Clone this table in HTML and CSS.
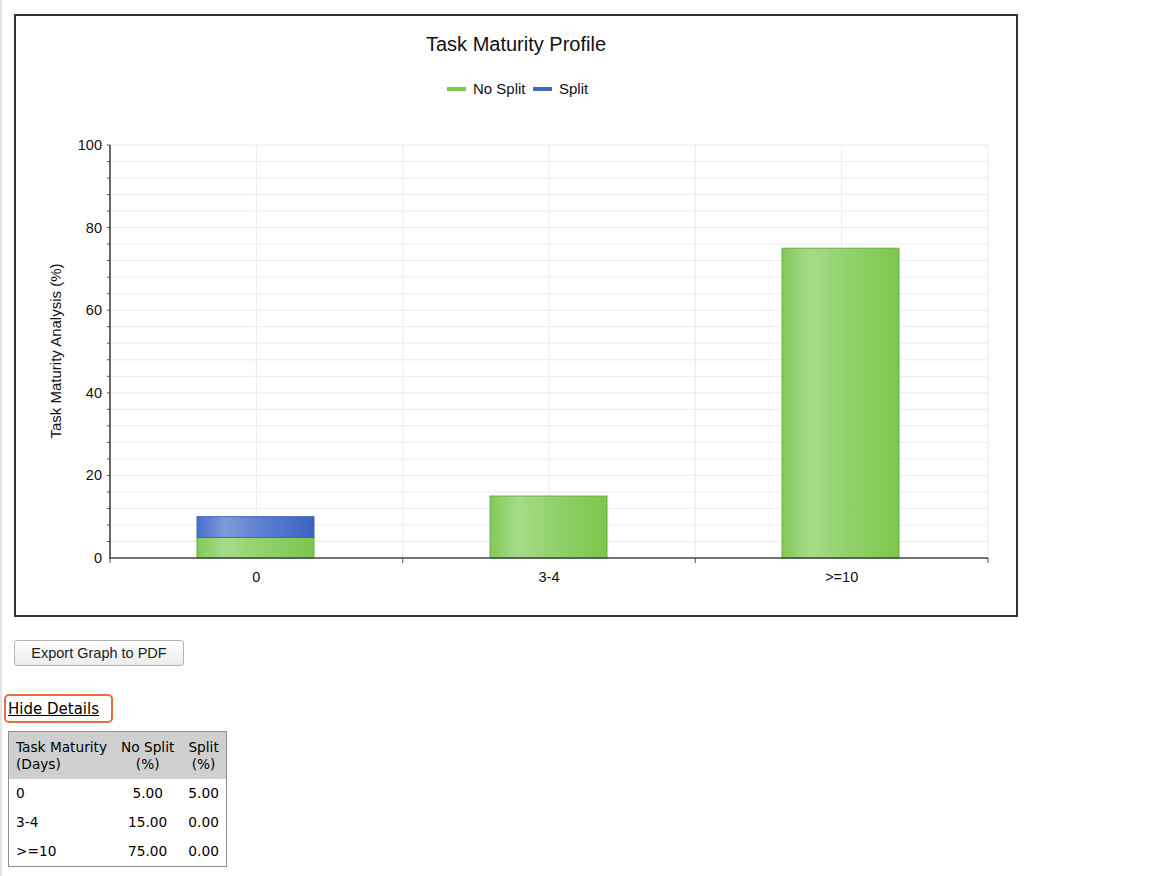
FILE: index.html
```html
<!DOCTYPE html>
<html>
<head>
<meta charset="utf-8">
<title>Task Maturity Profile</title>
<link rel="stylesheet" href="styles.css">
</head>
<body>
<div class="page">
  <div class="chart-box">
    <svg class="chart" width="1000" height="599" viewBox="0 0 1000 599" xmlns="http://www.w3.org/2000/svg">
      <defs>
        <linearGradient id="gGreen" x1="0" y1="0" x2="1" y2="0">
          <stop offset="0" stop-color="#82c957"/>
          <stop offset="0.24" stop-color="#a7db8a"/>
          <stop offset="0.55" stop-color="#92d16c"/>
          <stop offset="1" stop-color="#7bc74c"/>
        </linearGradient>
        <linearGradient id="gBlue" x1="0" y1="0" x2="1" y2="0">
          <stop offset="0" stop-color="#4870cd"/>
          <stop offset="0.24" stop-color="#809bda"/>
          <stop offset="0.55" stop-color="#5d80d2"/>
          <stop offset="1" stop-color="#3c63c2"/>
        </linearGradient>
      </defs>
      <text class="title" x="500" y="35" text-anchor="middle">Task Maturity Profile</text>
      <line x1="431" y1="73" x2="450" y2="73" stroke="#7cc84f" stroke-width="4"/>
      <text class="legend" x="457" y="78">No Split</text>
      <line x1="517" y1="73" x2="536" y2="73" stroke="#4368c6" stroke-width="4"/>
      <text class="legend" x="543" y="78">Split</text>

      <g class="grid">
        <line x1="94" y1="129" x2="972" y2="129"/>
        <line x1="94" y1="145.5" x2="972" y2="145.5"/>
        <line x1="94" y1="162" x2="972" y2="162"/>
        <line x1="94" y1="178.6" x2="972" y2="178.6"/>
        <line x1="94" y1="195.1" x2="972" y2="195.1"/>
        <line x1="94" y1="211.6" x2="972" y2="211.6"/>
        <line x1="94" y1="228.1" x2="972" y2="228.1"/>
        <line x1="94" y1="244.6" x2="972" y2="244.6"/>
        <line x1="94" y1="261.2" x2="972" y2="261.2"/>
        <line x1="94" y1="277.7" x2="972" y2="277.7"/>
        <line x1="94" y1="294.2" x2="972" y2="294.2"/>
        <line x1="94" y1="310.7" x2="972" y2="310.7"/>
        <line x1="94" y1="327.2" x2="972" y2="327.2"/>
        <line x1="94" y1="343.8" x2="972" y2="343.8"/>
        <line x1="94" y1="360.3" x2="972" y2="360.3"/>
        <line x1="94" y1="376.8" x2="972" y2="376.8"/>
        <line x1="94" y1="393.3" x2="972" y2="393.3"/>
        <line x1="94" y1="409.8" x2="972" y2="409.8"/>
        <line x1="94" y1="426.4" x2="972" y2="426.4"/>
        <line x1="94" y1="442.9" x2="972" y2="442.9"/>
        <line x1="94" y1="459.4" x2="972" y2="459.4"/>
        <line x1="94" y1="475.9" x2="972" y2="475.9"/>
        <line x1="94" y1="492.4" x2="972" y2="492.4"/>
        <line x1="94" y1="509" x2="972" y2="509"/>
        <line x1="94" y1="525.5" x2="972" y2="525.5"/>
        <line x1="240.3" y1="129" x2="240.3" y2="542"/>
        <line x1="386.7" y1="129" x2="386.7" y2="542"/>
        <line x1="533" y1="129" x2="533" y2="542"/>
        <line x1="679.3" y1="129" x2="679.3" y2="542"/>
        <line x1="825.7" y1="129" x2="825.7" y2="542"/>
        <line x1="972" y1="129" x2="972" y2="542"/>
      </g>

      <g class="ticks">
        <line x1="91" y1="129" x2="94" y2="129"/>
        <line x1="91" y1="145.5" x2="94" y2="145.5"/>
        <line x1="91" y1="162" x2="94" y2="162"/>
        <line x1="91" y1="178.6" x2="94" y2="178.6"/>
        <line x1="91" y1="195.1" x2="94" y2="195.1"/>
        <line x1="91" y1="211.6" x2="94" y2="211.6"/>
        <line x1="91" y1="228.1" x2="94" y2="228.1"/>
        <line x1="91" y1="244.6" x2="94" y2="244.6"/>
        <line x1="91" y1="261.2" x2="94" y2="261.2"/>
        <line x1="91" y1="277.7" x2="94" y2="277.7"/>
        <line x1="91" y1="294.2" x2="94" y2="294.2"/>
        <line x1="91" y1="310.7" x2="94" y2="310.7"/>
        <line x1="91" y1="327.2" x2="94" y2="327.2"/>
        <line x1="91" y1="343.8" x2="94" y2="343.8"/>
        <line x1="91" y1="360.3" x2="94" y2="360.3"/>
        <line x1="91" y1="376.8" x2="94" y2="376.8"/>
        <line x1="91" y1="393.3" x2="94" y2="393.3"/>
        <line x1="91" y1="409.8" x2="94" y2="409.8"/>
        <line x1="91" y1="426.4" x2="94" y2="426.4"/>
        <line x1="91" y1="442.9" x2="94" y2="442.9"/>
        <line x1="91" y1="459.4" x2="94" y2="459.4"/>
        <line x1="91" y1="475.9" x2="94" y2="475.9"/>
        <line x1="91" y1="492.4" x2="94" y2="492.4"/>
        <line x1="91" y1="509" x2="94" y2="509"/>
        <line x1="91" y1="525.5" x2="94" y2="525.5"/>
        <line x1="94" y1="542" x2="94" y2="547"/>
        <line x1="386.7" y1="542" x2="386.7" y2="547"/>
        <line x1="679.3" y1="542" x2="679.3" y2="547"/>
        <line x1="972" y1="542" x2="972" y2="547"/>
      </g>

      <rect x="181" y="521.35" width="117" height="20.65" fill="url(#gGreen)" stroke="#6fae4a" stroke-width="1"/>
      <rect x="181" y="500.7" width="117" height="20.65" fill="url(#gBlue)" stroke="#3f63bb" stroke-width="1"/>
      <rect x="474" y="480.05" width="117" height="61.95" fill="url(#gGreen)" stroke="#6fae4a" stroke-width="1"/>
      <rect x="766" y="232.25" width="117" height="309.75" fill="url(#gGreen)" stroke="#6fae4a" stroke-width="1"/>

      <line class="axis" x1="94" y1="129" x2="94" y2="542"/>
      <line class="axis" x1="93" y1="542" x2="972" y2="542"/>

      <g class="ylabels">
        <text x="86" y="134">100</text>
        <text x="86" y="216.6">80</text>
        <text x="86" y="299.2">60</text>
        <text x="86" y="381.8">40</text>
        <text x="86" y="464.4">20</text>
        <text x="86" y="547">0</text>
      </g>
      <g class="xlabels">
        <text x="240.3" y="566">0</text>
        <text x="533" y="566">3-4</text>
        <text x="825.7" y="566">&gt;=10</text>
      </g>
      <text class="ytitle" x="39" y="335" transform="rotate(-90 39 335)">Task Maturity Analysis (%)</text>
    </svg>
  </div>

  <button class="export-btn" type="button">Export Graph to PDF</button>

  <div class="details-row">
    <a class="details-link" href="#">Hide Details</a>
  </div>

  <table class="details">
    <thead>
      <tr>
        <th class="c1">Task Maturity<br>(Days)</th>
        <th>No Split<br>(%)</th>
        <th>Split<br>(%)</th>
      </tr>
    </thead>
    <tbody>
      <tr><td class="c1">0</td><td>5.00</td><td>5.00</td></tr>
      <tr><td class="c1">3-4</td><td>15.00</td><td>0.00</td></tr>
      <tr><td class="c1">&gt;=10</td><td>75.00</td><td>0.00</td></tr>
    </tbody>
  </table>
</div>
</body>
</html>
```

FILE: styles.css
```css
html, body {
  margin: 0;
  padding: 0;
  background: #ffffff;
}

.page {
  min-height: 876px;
  box-sizing: border-box;
  border-left: 2px solid #e4e4e4;
  padding-top: 14px;
  font-family: "Liberation Sans", Arial, sans-serif;
  color: #000;
}

.chart-box {
  margin-left: 12px;
  width: 1000px;
  height: 599px;
  border: 2px solid #333333;
}

.chart {
  display: block;
}

.chart text {
  font-family: "Liberation Sans", Arial, sans-serif;
  fill: #111;
}

.chart .title {
  font-size: 20px;
}

.chart .legend {
  font-size: 15px;
}

.chart .grid line {
  stroke: #ececec;
  stroke-width: 1;
}

.chart .ticks line {
  stroke: #555555;
  stroke-width: 1;
}

.chart .axis {
  stroke: #444444;
  stroke-width: 1.6;
}

.chart .ylabels text {
  font-size: 14.5px;
  text-anchor: end;
}

.chart .xlabels text {
  font-size: 14.5px;
  text-anchor: middle;
}

.chart .ytitle {
  font-size: 15px;
  text-anchor: middle;
  dominant-baseline: central;
}

.export-btn {
  display: block;
  margin: 23px 0 0 12px;
  width: 170px;
  height: 26px;
  padding: 0;
  font-family: "Liberation Sans", Arial, sans-serif;
  font-size: 14.5px;
  color: #222;
  background: linear-gradient(#ffffff, #ececec);
  border: 1px solid #b4b4b4;
  border-radius: 3px;
}

.details-row {
  margin: 28px 0 0 2px;
}

.details-link {
  display: inline-block;
  padding: 4px 12px 3px 2px;
  border: 2px solid #e8703e;
  border-radius: 5px;
  font-family: "DejaVu Sans", Verdana, sans-serif;
  font-size: 15px;
  line-height: 18px;
  color: #000;
  text-decoration: underline;
}

.details {
  margin: 8px 0 0 6px;
  border-collapse: collapse;
  border: 1px solid #8f8f8f;
  font-family: "DejaVu Sans", Verdana, sans-serif;
  font-size: 13.7px;
  line-height: 17px;
  color: #000;
}

.details th {
  background: #cfcfcf;
  font-weight: normal;
  text-align: center;
  padding: 7px 7px 6px 7px;
  vertical-align: top;
}

.details td {
  text-align: center;
  padding: 6px 7px;
}

.details .c1 {
  text-align: left;
}
```
